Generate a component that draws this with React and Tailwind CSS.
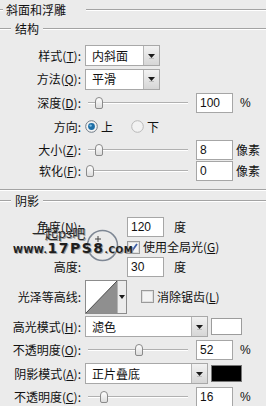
const Etch = ({ className = '' }) => (
  <div className={`h-0 border-t border-t-[#a3a3a3] border-b border-b-white ${className}`} />
);

const Label = ({ children }) => (
  <div className="w-[81px] shrink-0 text-right whitespace-nowrap">{children}</div>
);

const Arrow = () => (
  <svg width="9" height="6" viewBox="0 0 9 6">
    <path d="M1 1 H8 L4.5 5 Z" fill="#1a1a1a" />
    <path d="M2 5.5 H7" stroke="#bdbdbd" strokeWidth="1" />
  </svg>
);

const Dropdown = ({ value, width }) => (
  <div className={`flex h-[21px] border border-[#a8a8a8] bg-white ${width}`}>
    <div className="flex-1 pl-[6px] flex items-center">{value}</div>
    <div className="w-[16px] border-l border-[#b5b5b5] bg-gradient-to-b from-[#f2f2f2] to-[#d6d6d6] flex items-center justify-center">
      <Arrow />
    </div>
  </div>
);

const Field = ({ value }) => (
  <div className="w-[37px] h-[20px] border border-[#a6a6a6] bg-white pl-[3px] flex items-center font-['Liberation_Sans',sans-serif] text-[12px]">
    {value}
  </div>
);

const Slider = ({ thumb }) => (
  <div className="relative w-[111px] h-[20px] shrink-0">
    <div className="absolute left-[3px] right-[8px] top-[9px] h-0 border-t border-t-[#b0b0b0] border-b border-b-white" />
    <div
      className="absolute top-[4px] w-[8px] h-[12px] rounded-t-[4px] rounded-b-[2px] border border-[#8a8a8a] bg-gradient-to-b from-white to-[#dcdcdc]"
      style={{ left: thumb }}
    />
  </div>
);

const Radio = ({ on }) => (
  <svg width="13" height="13" viewBox="0 0 13 13">
    <circle cx="6.5" cy="6.5" r="5.8" fill={on ? '#f4f4f4' : '#f2f2f2'} stroke={on ? '#6f7b86' : '#b9b9b9'} />
    {on && <circle cx="6.5" cy="6.5" r="3.4" fill="#1d6ea6" />}
    {on && <circle cx="5.6" cy="5.6" r="1.2" fill="#7fc0e6" />}
  </svg>
);

const Check = ({ on }) => (
  <svg width="13" height="13" viewBox="0 0 13 13">
    <rect x="0.5" y="0.5" width="12" height="12" fill="#f3f3f3" stroke="#9a9a9a" />
    <rect x="1.5" y="1.5" width="10" height="10" fill="none" stroke="#dedede" />
    {on && <path d="M3 6.5 L5.3 9.5 L10 3" fill="none" stroke="#3d5fa8" strokeWidth="1.8" />}
  </svg>
);

const Row = ({ h, label, children }) => (
  <div className={`flex items-center gap-[4px] ${h}`}>
    <Label>{label}</Label>
    {children}
  </div>
);

export default function App() {
  return (
    <div className="w-[266px] h-[406px] overflow-hidden bg-[#ebebeb] text-[#111] text-[12px] leading-none font-['Noto_Sans_CJK_SC',sans-serif]">
      {/* 斜面和浮雕 */}
      <div className="flex items-center h-[20px]">
        <Etch className="w-[3px]" />
        <span className="pl-[3px]">斜面和浮雕</span>
        <Etch className="flex-1 ml-[20px]" />
      </div>

      {/* 结构 */}
      <div className="flex items-center h-[18px]">
        <Etch className="w-[11px]" />
        <span className="px-[4px]">结构</span>
        <Etch className="flex-1" />
      </div>
      <div className="h-[6px]" />

      <Row h="h-[23px]" label={<>样式(<u>T</u>):</>}>
        <Dropdown value="内斜面" width="w-[75px]" />
      </Row>
      <Row h="h-[24px]" label={<>方法(<u>Q</u>):</>}>
        <Dropdown value="平滑" width="w-[75px]" />
      </Row>
      <Row h="h-[23px]" label={<>深度(<u>D</u>):</>}>
        <div className="flex items-center">
          <Slider thumb={10} />
          <Field value="100" />
          <span className="ml-[7px] font-['Liberation_Sans',sans-serif]">%</span>
        </div>
      </Row>
      <Row h="h-[25px]" label="方向:">
        <div className="flex items-center">
          <Radio on />
          <span className="ml-[3px]">上</span>
          <span className="ml-[18px]"><Radio /></span>
          <span className="ml-[3px]">下</span>
        </div>
      </Row>
      <Row h="h-[21px]" label={<>大小(<u>Z</u>):</>}>
        <div className="flex items-center">
          <Slider thumb={10} />
          <Field value="8" />
          <span className="ml-[3px]">像素</span>
        </div>
      </Row>
      <Row h="h-[22px]" label={<>软化(<u>F</u>):</>}>
        <div className="flex items-center">
          <Slider thumb={1} />
          <Field value="0" />
          <span className="ml-[3px]">像素</span>
        </div>
      </Row>
      <div className="h-[7px]" />
      <Etch />

      {/* 阴影 */}
      <div className="flex items-center h-[20px]">
        <Etch className="w-[11px]" />
        <span className="px-[4px]">阴影</span>
        <Etch className="flex-1" />
      </div>
      <div className="h-[5px]" />

      <div className="relative flex">
        <div className="flex flex-col">
          <div className="h-[22px] flex items-center"><Label>角度(<u>N</u>):</Label></div>
          <div className="h-[18px]" />
          <div className="h-[22px] flex items-center"><Label>高度:</Label></div>
        </div>
        <div className="w-[46px] flex items-center justify-center">
          <svg width="33" height="33" viewBox="0 0 33 33" className="-mt-[3px] -ml-[4px]">
            <circle cx="16.5" cy="16.5" r="15" fill="none" stroke="#7e8794" strokeWidth="1.5" />
            <path d="M12 7 V13 M9 10 H15" stroke="#444" strokeWidth="1" />
          </svg>
        </div>
        <div className="flex flex-col">
          <div className="h-[22px] flex items-center gap-[3px]">
            <Field value="120" />
            <span className="w-[4px]" />
            <span>度</span>
          </div>
          <div className="h-[18px] flex items-center">
            <Check on />
            <span className="ml-[3px]">使用全局光(<u>G</u>)</span>
          </div>
          <div className="h-[22px] flex items-center gap-[3px]">
            <Field value="30" />
            <span className="w-[4px]" />
            <span>度</span>
          </div>
        </div>

        {/* watermark */}
        <div className="absolute left-[32px] top-[10px] text-[13px] text-[#2a2a2a] [text-shadow:1px_1px_0_#9a9a9a] whitespace-nowrap">
          一起ps吧
        </div>
        <div className="absolute left-[13px] top-[25px] flex items-end font-['DejaVu_Sans',sans-serif] font-bold text-[#1e1e1e] [text-shadow:1px_1px_0_#a0a0a0] whitespace-nowrap">
          <span className="text-[9px] leading-none tracking-[0.5px]">WWW.</span>
          <span className="text-[14px] leading-none tracking-[1.5px]">17PS8</span>
          <span className="text-[9px] leading-none tracking-[0.5px]">.COM</span>
        </div>
      </div>

      <Row h="h-[37px]" label="光泽等高线:">
        <div className="flex items-center">
          <div className="flex h-[34px] border border-[#8c8c8c] bg-white">
            <svg width="31" height="32" viewBox="0 0 31 32">
              <path d="M0 32 L31 0 V32 Z" fill="#8f8f8f" />
              <path d="M0 32 L31 0" stroke="#4a4a4a" strokeWidth="1" />
            </svg>
            <div className="w-[9px] border-l border-[#b5b5b5] bg-[#ececec] flex items-center justify-center">
              <svg width="6" height="4" viewBox="0 0 6 4"><path d="M0 0 H6 L3 4 Z" fill="#1a1a1a" /></svg>
            </div>
          </div>
          <span className="ml-[14px]"><Check /></span>
          <span className="ml-[3px]">消除锯齿(<u>L</u>)</span>
        </div>
      </Row>
      <Row h="h-[23px]" label={<>高光模式(<u>H</u>):</>}>
        <div className="flex items-center">
          <Dropdown value="滤色" width="w-[123px]" />
          <div className="ml-[3px] w-[31px] h-[17px] border border-[#9c9c9c] bg-white" />
        </div>
      </Row>
      <Row h="h-[23px]" label={<>不透明度(<u>O</u>):</>}>
        <div className="flex items-center">
          <Slider thumb={50} />
          <Field value="52" />
          <span className="ml-[7px] font-['Liberation_Sans',sans-serif]">%</span>
        </div>
      </Row>
      <Row h="h-[25px]" label={<>阴影模式(<u>A</u>):</>}>
        <div className="flex items-center">
          <Dropdown value="正片叠底" width="w-[123px]" />
          <div className="ml-[3px] w-[31px] h-[17px] border border-[#777] bg-black" />
        </div>
      </Row>
      <Row h="h-[22px]" label={<>不透明度(<u>C</u>):</>}>
        <div className="flex items-center">
          <Slider thumb={15} />
          <Field value="16" />
          <span className="ml-[7px] font-['Liberation_Sans',sans-serif]">%</span>
        </div>
      </Row>
    </div>
  );
}
